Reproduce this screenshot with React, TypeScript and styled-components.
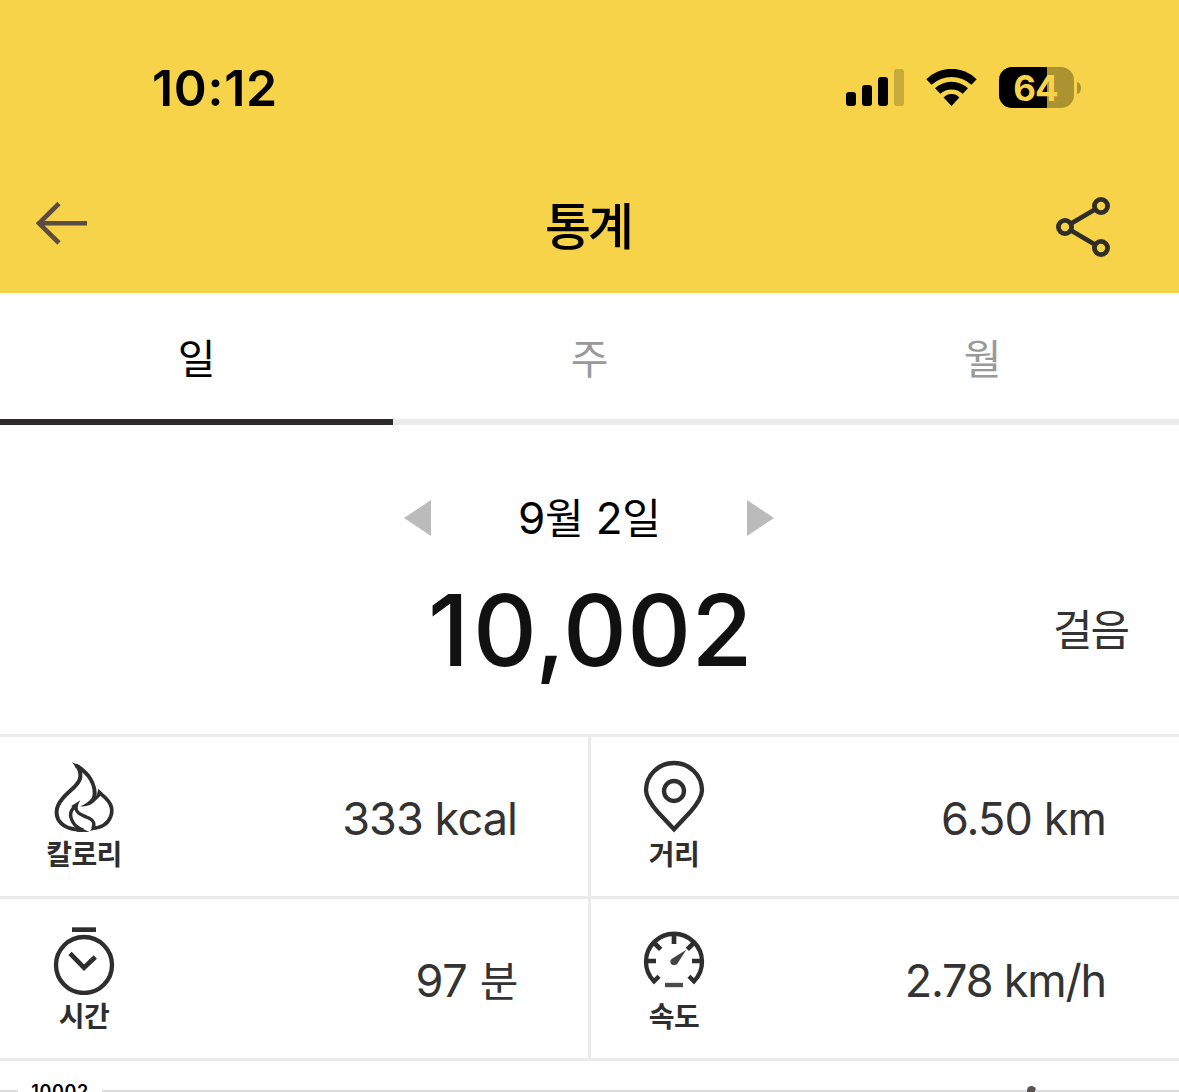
import React from "react";
import styled, { createGlobalStyle } from "styled-components";

const Global = createGlobalStyle`
  * { box-sizing: border-box; }
  body { margin: 0; background: #fff; overflow: hidden; }
`;

const Screen = styled.main`
  width: 1179px;
  height: 1092px;
  overflow: hidden;
  display: flex;
  flex-direction: column;
  background: #fff;
  font-family: Inter, "Noto Sans CJK KR", sans-serif;
  color: #000;
  white-space: nowrap;
`;

const Header = styled.header`
  height: 293px;
  flex: none;
  background: #f6d348;
`;

const StatusBar = styled.div`
  height: 160px;
  padding: 67px 98px 0 152px;
  display: flex;
  align-items: flex-start;
  justify-content: space-between;
`;

const Clock = styled.time`
  font-size: 50px;
  font-weight: 600;
  line-height: 42px;
  letter-spacing: 0.7px;
`;

const StatusIcons = styled.div`
  display: flex;
  align-items: flex-start;
`;

const Signal = styled.svg`
  margin: 2px 22px 0 0;
`;

const Wifi = styled.svg`
  margin: 2px 22px 0 0;
`;

const Battery = styled.div`
  width: 75px;
  height: 41px;
  padding-right: 2px;
  border-radius: 13px;
  background: linear-gradient(90deg, #000 48px, #ac9231 48px);
  color: #f6d348;
  font-size: 35px;
  font-weight: 700;
  line-height: 42px;
  text-align: center;
  letter-spacing: -1px;
`;

const BatteryCap = styled.div`
  width: 4px;
  height: 12px;
  margin: 15px 0 0 3px;
  border-radius: 0 4px 4px 0 / 0 6px 6px 0;
  background: #ac9231;
`;

const NavBar = styled.nav`
  height: 133px;
  padding: 0 69px 0 36px;
  display: grid;
  grid-template-columns: 54px 1fr 54px;
  align-items: start;
`;

const BackIcon = styled.svg`
  margin-top: 41px;
`;

const ShareIcon = styled.svg`
  margin-top: 36px;
`;

const Title = styled.h1`
  margin: 34px 0 0 30px;
  font-size: 50px;
  font-weight: 500;
  line-height: 66px;
  text-align: center;
`;

const Tabs = styled.div`
  height: 132px;
  flex: none;
  display: grid;
  grid-template-columns: repeat(3, 1fr);
`;

const Tab = styled.button<{ $active?: boolean }>`
  padding: 0;
  border: 0;
  border-bottom: 6px solid ${(p) => (p.$active ? "#2c2a2b" : "#ebebeb")};
  background: none;
  font: 400 41px "Noto Sans CJK KR", sans-serif;
  color: ${(p) => (p.$active ? "#000" : "#999")};
`;

const Summary = styled.section`
  height: 309px;
  flex: none;
  display: flex;
  flex-direction: column;
`;

const DateRow = styled.div`
  height: 42px;
  margin: 72px 405px 0 404px;
  display: flex;
  align-items: center;
  justify-content: space-between;
`;

const DateText = styled.div`
  font-size: 44px;
  line-height: 42px;
  letter-spacing: -0.3px;
`;

const Hangul = styled.span<{ $size: number; $gap?: number }>`
  font-family: "Noto Sans CJK KR", sans-serif;
  font-size: ${(p) => p.$size}px;
  line-height: 0;
  letter-spacing: ${(p) => p.$gap ?? 0}px;
`;

const StepRow = styled.div`
  height: 100px;
  margin-top: 41px;
  padding: 0 51px 0 0;
  display: grid;
  grid-template-columns: 428px 1fr auto;
  align-items: center;
`;

const Steps = styled.strong`
  grid-column: 2;
  font-size: 99px;
  font-weight: 500;
  line-height: 100px;
  letter-spacing: 0.3px;
  color: #111;
`;

const LeadDigit = styled.span`
  letter-spacing: 4px;
`;

const Comma = styled.span`
  margin-left: -2px;
`;

const StepUnit = styled.span`
  font-size: 43px;
  line-height: 60px;
  letter-spacing: -2px;
  color: #333;
`;

const Metrics = styled.section`
  height: 327px;
  flex: none;
  padding: 3px 0;
  display: grid;
  grid-template-columns: 588px 588px;
  grid-template-rows: 159px 159px;
  gap: 3px;
  background: #ebebeb;
`;

const Metric = styled.article`
  padding: 0 71px 0 0;
  display: flex;
  justify-content: space-between;
  background: #fff;

  &:nth-child(even) {
    padding-right: 73px;
  }
`;

const MetricLabel = styled.div`
  width: 168px;
  display: flex;
  flex-direction: column;
  align-items: center;
  font: 700 28px/40px "Noto Sans CJK KR", sans-serif;
  letter-spacing: -0.6px;
  color: #2e2e2e;

  ${Metric}:nth-child(even) & {
    width: 166px;
  }
`;

const MetricIcon = styled.svg`
  width: 100px;
  height: 96px;
  flex: none;
  fill: none;
  stroke: #2e2e2e;
  stroke-width: 13;
`;

const MetricValue = styled.div<{ $spacing?: number }>`
  padding-top: 59px;
  font-size: 45px;
  line-height: 46px;
  letter-spacing: ${(p) => p.$spacing ?? -0.9}px;
  color: #333;
`;

const ChartTop = styled.section`
  height: 31px;
  flex: none;
  overflow: hidden;
  display: flex;
  align-items: flex-start;
`;

const GridLine = styled.div<{ $width: number }>`
  width: ${(p) => p.$width}px;
  height: 2px;
  margin-top: 29px;
  background: #dcdcdc;
`;

const AxisLabel = styled.span`
  width: 84px;
  padding-top: 21px;
  text-align: center;
  font-size: 18px;
  font-weight: 600;
  line-height: 20px;
  letter-spacing: 0.6px;
`;

const PeakDot = styled.i`
  width: 9px;
  height: 9px;
  margin: 25px -1px 0;
  border-radius: 50%;
  background: #5a5353;
`;

function Flame() {
  return (
    <MetricIcon viewBox="12 -39 300 288">
      <path d="M137 46 C171 66 200 99 193 145" strokeWidth="12" />
      <path d="M143 48 C161 81 149 98 120 123 C85 154 72 178 84 207 C95 230 123 239 158 240" strokeWidth="12" />
      <path d="M207 128 C239 149 252 174 242 200 C233 223 214 234 186 235" strokeWidth="11" />
      <path d="M141 166 C121 178 116 195 129 217 C135 227 145 235 160 240" strokeWidth="10" />
      <path d="M137 172 C139 191 154 194 171 202 C194 212 195 222 188 237" strokeWidth="10" />
      <g fill="#2e2e2e" stroke="none">
        <path d="M126 37 L150 47 L145 62Z" />
        <path d="M205 116 L219 130 L198 151 C185 166 169 171 150 169 C172 160 186 148 190 131 L200 137Z" />
        <path d="M151 151 C144 163 142 172 142 180 L130 178 L124 168Z" />
        <path d="M140 227 L178 246 L140 245Z M193 224 L180 243 L201 236Z" />
      </g>
    </MetricIcon>
  );
}

function Pin() {
  return (
    <MetricIcon viewBox="-3 -39 300 288">
      <path d="M147 238 L99 187 C75 160 63 141 63 121 A84 82 0 0 1 231 121 C231 141 219 160 195 187Z" />
      <circle cx="147" cy="123" r="30" />
    </MetricIcon>
  );
}

function Stopwatch() {
  return (
    <MetricIcon viewBox="12 -48 300 288">
      <circle cx="162" cy="150" r="84" />
      <path d="M126 44H198" strokeWidth="14" />
      <path d="M120 115L162 158L196 126" strokeWidth="14" />
    </MetricIcon>
  );
}

function Gauge() {
  return (
    <MetricIcon viewBox="-3 -48 300 288">
      <path d="M102 184L87 199A84 84 0 1 1 207 199L192 184" />
      <path d="M147 60V87M66 138H93M228 138H201M88 84L107 103M206 84L187 103" strokeWidth="14" />
      <path d="M120 210H174" stroke="#4a4a4a" />
      <path d="M184 104L157 146C150 154 136 150 136 140C136 136 139 132 143 130Z" fill="#444" stroke="none" />
    </MetricIcon>
  );
}

export default function App() {
  return (
    <Screen>
      <Global />
      <Header>
        <StatusBar>
          <Clock>10:12</Clock>
          <StatusIcons>
            <Signal width="58" height="37">
              <rect y="23" width="10" height="14" rx="3" />
              <rect x="16" y="16" width="10" height="21" rx="3" />
              <rect x="32" y="8" width="10" height="29" rx="3" />
              <rect x="48" width="10" height="37" rx="3" fill="#c6aa3a" />
            </Signal>
            <Wifi width="51" height="37" viewBox="0 0 51 37">
              <path d="M.3 10.3A35.5 35.5 0 0 1 50.7 10.3L45.4 15.8A29.6 29.6 0 0 0 5.6 15.8Z" />
              <path d="M9 19.3A23.9 23.9 0 0 1 42 19.3L36.7 24.8A16.5 16.5 0 0 0 14.3 24.8Z" />
              <path d="M17.6 28.5A10.9 10.9 0 0 1 33.4 28.5L25.5 37Z" />
            </Wifi>
            <Battery>64</Battery>
            <BatteryCap />
          </StatusIcons>
        </StatusBar>
        <NavBar>
          <BackIcon width="54" height="44" viewBox="0 0 54 44" fill="none" stroke="#5b4b43" strokeWidth="4.6">
            <path d="M51 22.3H3M23 2.5L3 22.3L23 42" />
          </BackIcon>
          <Title><Hangul $size={50} $gap={-3}>통계</Hangul></Title>
          <ShareIcon width="54" height="62" viewBox="0 0 54 62" fill="none" stroke="#302d26" strokeWidth="4.8">
            <circle cx="9" cy="31" r="6.6" />
            <circle cx="45" cy="10" r="6.6" />
            <circle cx="45" cy="52" r="6.6" />
            <path d="M14.7 27.7L39.3 13.3M14.7 34.3L39.3 48.7" />
          </ShareIcon>
        </NavBar>
      </Header>
      <Tabs>
        <Tab $active>일</Tab>
        <Tab>주</Tab>
        <Tab>월</Tab>
      </Tabs>
      <Summary>
        <DateRow>
          <svg width="27" height="36"><path d="M27 0V36L0 18Z" fill="#bbb" /></svg>
          <DateText>9<Hangul $size={42}>월</Hangul> 2<Hangul $size={42} $gap={-1}>일</Hangul></DateText>
          <svg width="27" height="36"><path d="M0 0V36L27 18Z" fill="#bbb" /></svg>
        </DateRow>
        <StepRow>
          <Steps><LeadDigit>1</LeadDigit>0<Comma>,</Comma>002</Steps>
          <StepUnit>걸음</StepUnit>
        </StepRow>
      </Summary>
      <Metrics>
        <Metric>
          <MetricLabel><Flame />칼로리</MetricLabel>
          <MetricValue>333 kcal</MetricValue>
        </Metric>
        <Metric>
          <MetricLabel><Pin />거리</MetricLabel>
          <MetricValue>6.50 km</MetricValue>
        </Metric>
        <Metric>
          <MetricLabel><Stopwatch />시간</MetricLabel>
          <MetricValue $spacing={-0.3}>97 <Hangul $size={42} $gap={-1.5}>분</Hangul></MetricValue>
        </Metric>
        <Metric>
          <MetricLabel><Gauge />속도</MetricLabel>
          <MetricValue $spacing={-1.2}>2.78 km/h</MetricValue>
        </Metric>
      </Metrics>
      <ChartTop>
        <GridLine $width={18} />
        <AxisLabel>10002</AxisLabel>
        <GridLine $width={926} />
        <PeakDot />
        <GridLine $width={144} />
      </ChartTop>
    </Screen>
  );
}
